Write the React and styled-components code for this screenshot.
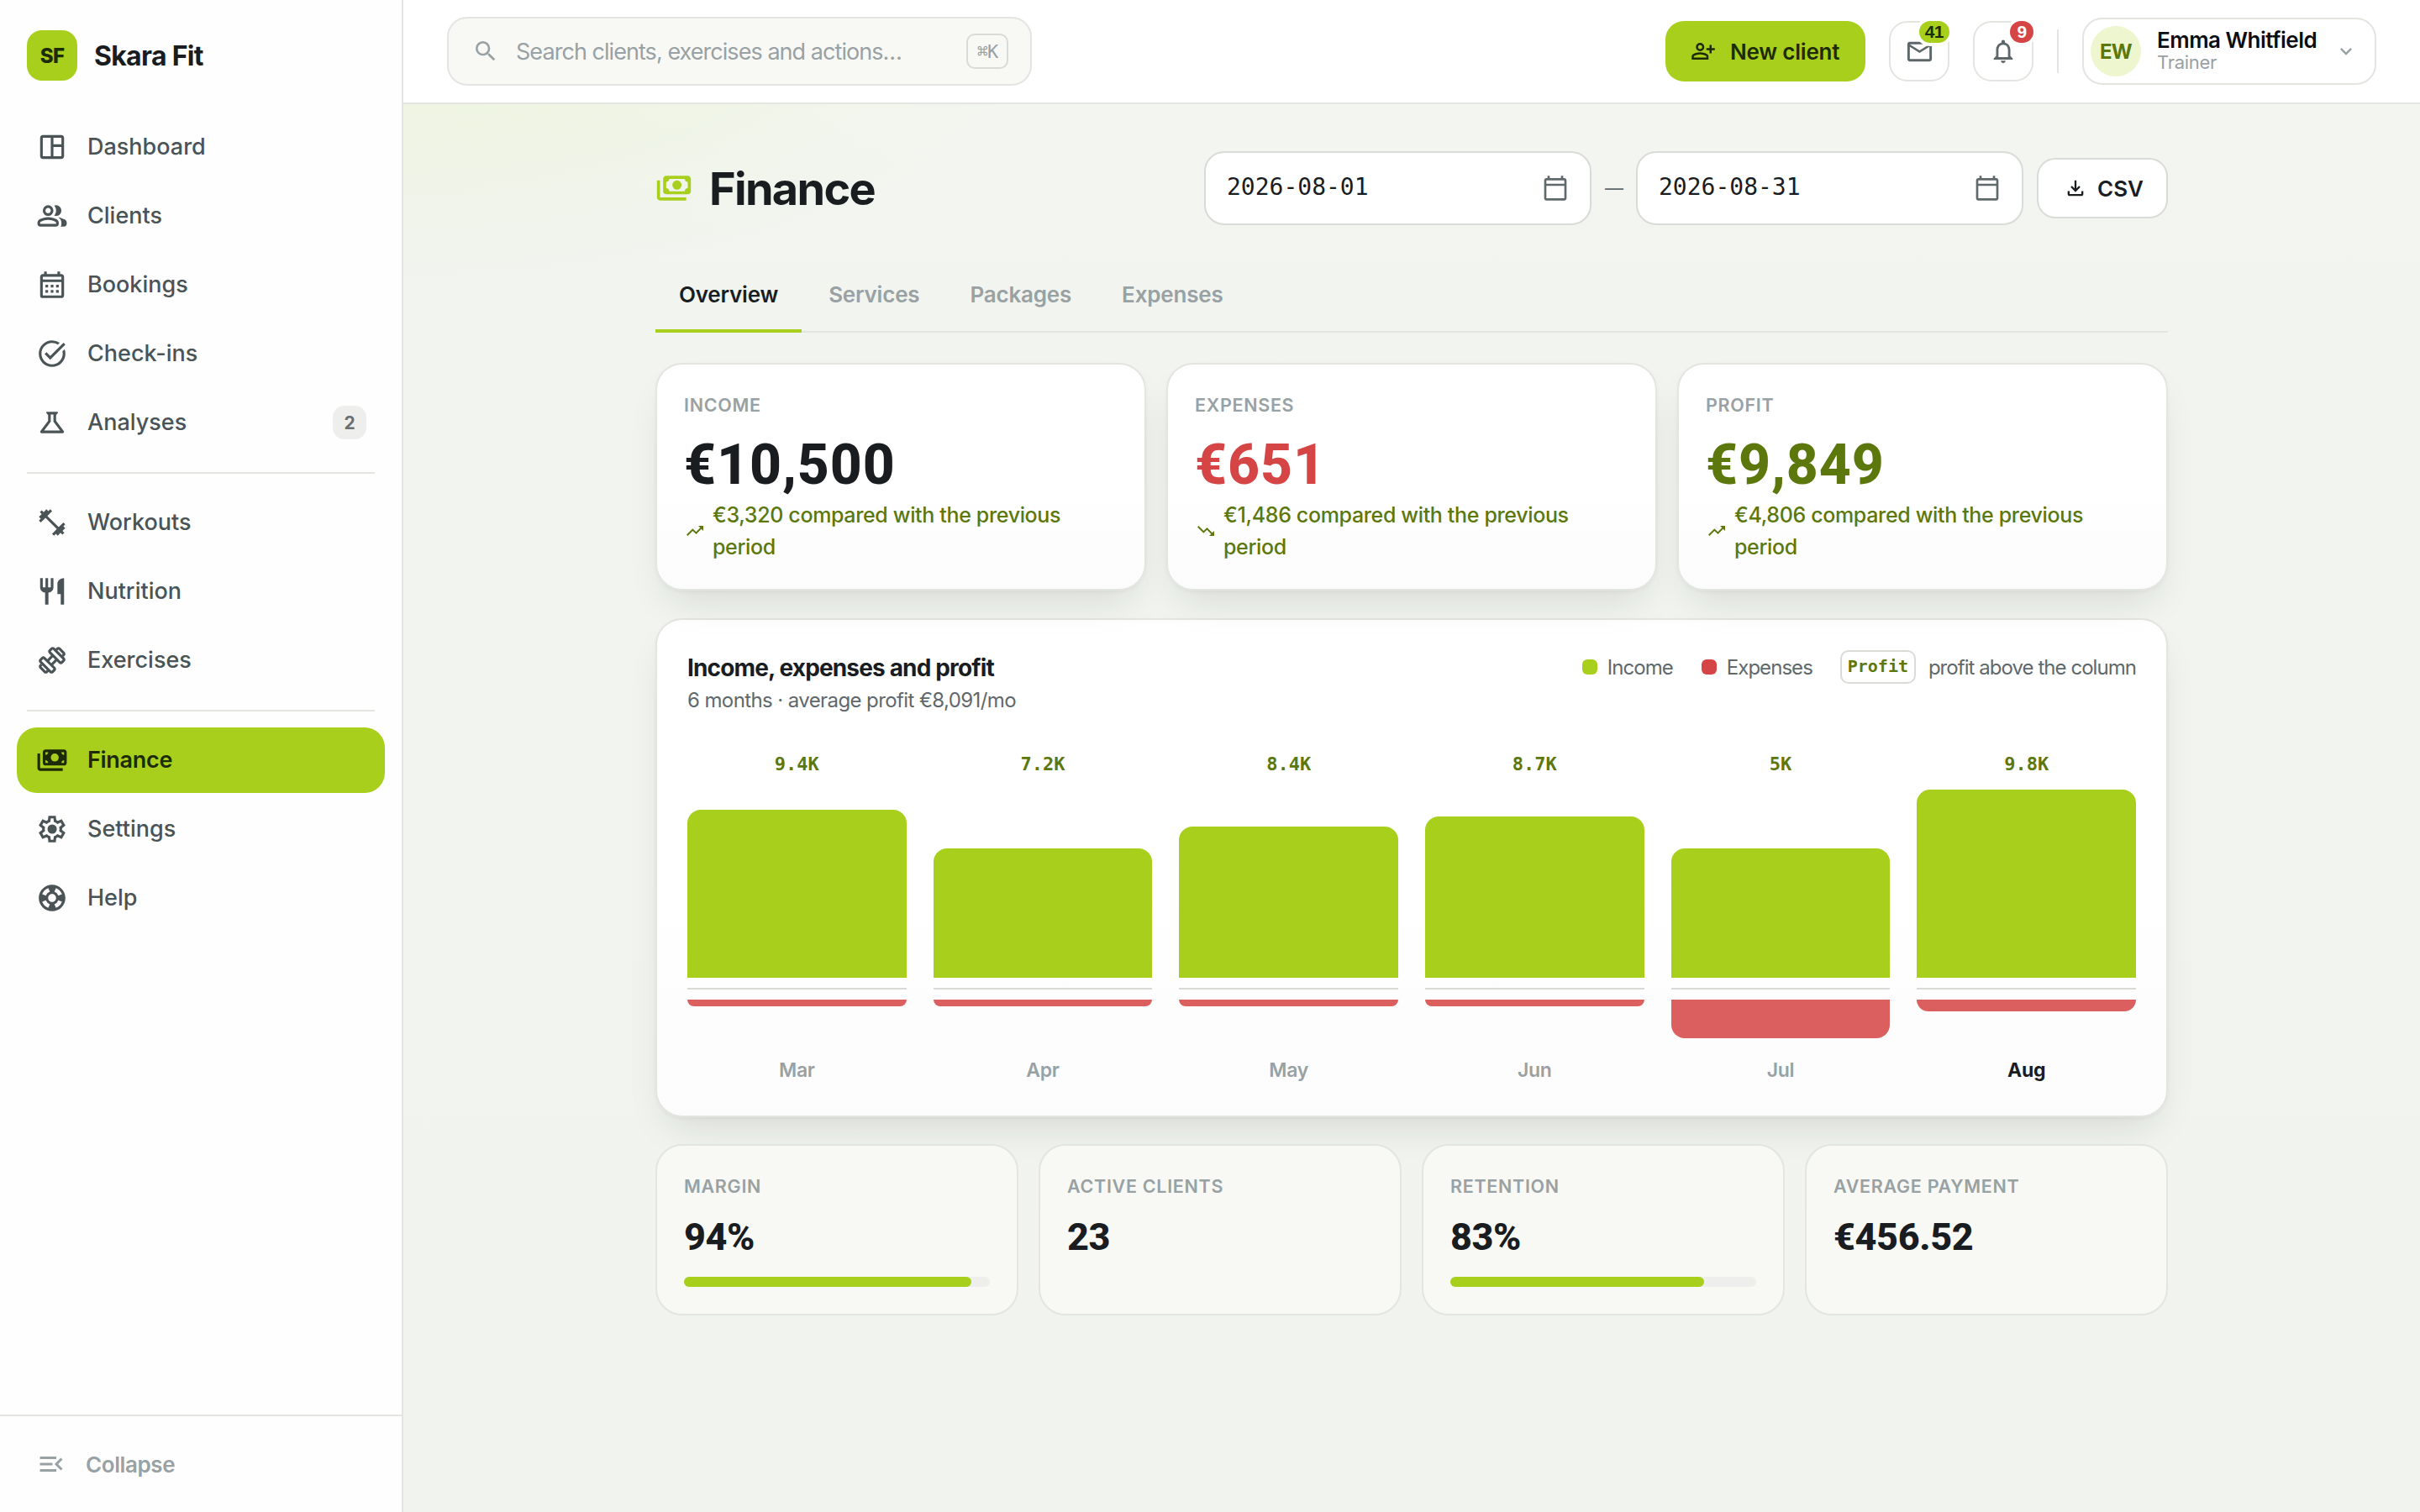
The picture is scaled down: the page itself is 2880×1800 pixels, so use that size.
import React from 'react';
import styled, { createGlobalStyle, css } from 'styled-components';
import {
  MdOutlineSpaceDashboard,
  MdOutlineCalendarMonth,
  MdTaskAlt,
  MdOutlineScience,
  MdRestaurant,
  MdSupport,
  MdMenuOpen,
  MdSearch,
  MdMailOutline,
  MdNotificationsNone,
  MdKeyboardArrowDown,
  MdOutlineCalendarToday,
  MdOutlineFileDownload,
  MdTrendingUp,
  MdTrendingDown,
} from 'react-icons/md';

const lime = '#a8cf1c';
const limeInk = '#1d2b05';
const limeText = '#5c780c';
const red = '#d64545';
const ink = '#1a1d1f';
const slate = '#4a5356';
const muted = '#98a1a3';
const line = '#e3e5e0';
const mono = "'DejaVu Sans Mono', 'Liberation Mono', monospace";
const digits = "Roboto, Inter, sans-serif";

const GlobalStyle = createGlobalStyle`
  * { box-sizing: border-box; }
  body {
    margin: 0;
    font-family: Inter, 'Liberation Sans', sans-serif;
    color: ${ink};
    background: #f0f3ee;
  }
  h1, h2, p { margin: 0; }
  svg { display: block; flex: none; }
`

/* Symbols missing from the icon package, on the 960 grid */
const Symbol = ({ d, size }) => (
  <svg width={size} height={size} viewBox="0 -960 960 960" fill="currentColor" fillRule="evenodd">
    <path d={d} />
  </svg>
)

const shapes = {
  group: 'M40-272q0-34 17.5-62.5T104-378q62-31 126-46.5T360-440q66 0 130 15.5T616-378q29 15 46.5 43.5T680-272v32q0 33-23.5 56.5T600-160H120q-33 0-56.5-23.5T40-240v-32Zm800 112H738q11-18 16.5-38.5T760-240v-40q0-44-24.5-84.5T666-434q51 6 96 20.5t84 35.5q36 20 55 44.5t19 53.5v40q0 33-23.5 56.5T840-160ZM360-480q-66 0-113-47t-47-113q0-66 47-113t113-47q66 0 113 47t47 113q0 66-47 113t-113 47Zm400-160q0 66-47 113t-113 47q-11 0-28-2.5t-28-5.5q27-32 41.5-71t14.5-81q0-42-14.5-81T544-792q14-5 28-6.5t28-1.5q66 0 113 47t47 113ZM120-240h480v-32q0-11-5.5-20T580-306q-54-27-109-40.5T360-360q-56 0-111 13.5T140-306q-9 5-14.5 14t-5.5 20v32Zm240-320q33 0 56.5-23.5T440-640q0-33-23.5-56.5T360-720q-33 0-56.5 23.5T280-640q0 33 23.5 56.5T360-560Z',
  exercise: 'm536-84-56-56 142-142-340-340-142 142-56-56 56-58-56-56 84-84-56-58 56-56 58 56 84-84 56 56 58-56 56 56-142 142 340 340 142-142 56 56-56 58 56 56-84 84 56 58-56 56-58-56-84 84-56-56-58 56Z',
  dumbbell: 'm826-585-56-56 30-31-128-128-31 30-57-57 30-31q23-23 57-22.5t57 23.5l129 129q23 23 23 56.5T857-615l-31 30ZM346-104q-23 23-56.5 23T233-104L104-233q-23-23-23-56.5t23-56.5l30-30 57 57-31 30 129 129 30-31 57 57-30 30Zm397-336 57-57-303-303-57 57 303 303ZM463-160l57-58-302-302-58 57 303 303Zm-6-234 110-109-64-64-109 110 63 63Zm63 290q-23 23-57 23t-57-23L104-406q-23-23-23-57t23-57l57-57q23-23 56.5-23t56.5 23l63 63 110-110-63-62q-23-23-23-57t23-57l57-57q23-23 56.5-23t56.5 23l303 303q23 23 23 56.5T857-441l-57 57q-23 23-57 23t-57-23l-62-63-110 110 63 63q23 23 23 56.5T577-161l-57 57Z',
  payments: 'M560-440q-50 0-85-35t-35-85 35-85 85-35 85 35 35 85-35 85-85 35ZM280-320q-33 0-56.5-23.5T200-400v-320q0-33 23.5-56.5T280-800h560q33 0 56.5 23.5T920-720v320q0 33-23.5 56.5T840-320H280Zm80-80h400q0-33 23.5-56.5T840-480v-160q-33 0-56.5-23.5T760-720H360q0 33-23.5 56.5T280-640v160q33 0 56.5 23.5T360-400Zm440 240H120q-33 0-56.5-23.5T40-240v-440h80v440h680v80Z',
  paymentsFill: 'M560-440q-50 0-85-35t-35-85 35-85 85-35 85 35 35 85-35 85-85 35ZM280-320q-33 0-56.5-23.5T200-400v-320q0-33 23.5-56.5T280-800h560q33 0 56.5 23.5T920-720v320q0 33-23.5 56.5T840-320H280Zm80-80q0-33-23.5-56.5T280-480v80h80Zm400 0h80v-80q-33 0-56.5 23.5T760-400ZM280-640q33 0 56.5-23.5T360-720h-80v80Zm560 0v-80h-80q0 33 23.5 56.5T840-640ZM800-160H120q-33 0-56.5-23.5T40-240v-440h80v440h680v80Z',
  settings: 'm370-80-16-128q-13-5-24.5-12T307-235l-119 50L78-375l103-78q-1-7-1-13.5v-27q0-6.5 1-13.5L78-585l110-190 119 50q11-8 23-15t24-12l16-128h220l16 128q13 5 24.5 12t22.5 15l119-50 110 190-103 78q1 7 1 13.5v27q0 6.5-2 13.5l103 78-110 190-118-50q-11 8-23 15t-24 12L590-80H370Zm70-80h79l14-106q31-8 57.5-23.5T639-327l99 41 39-68-86-65q5-14 7-29.5t2-31.5q0-16-2-31.5t-7-29.5l86-65-39-68-99 42q-22-23-48.5-38.5T533-694l-13-106h-79l-14 106q-31 8-57.5 23.5T321-633l-99-41-39 68 86 64q-5 15-7 30t-2 32q0 16 2 31t7 30l-86 65 39 68 99-42q22 23 48.5 38.5T427-266l13 106Zm42-180q58 0 99-41t41-99q0-58-41-99t-99-41q-59 0-99.5 41T342-480q0 58 40.5 99t99.5 41Z',
  personAdd: 'M720-400v-120H600v-80h120v-120h80v120h120v80H800v120h-80Zm-360-80q-66 0-113-47t-47-113q0-66 47-113t113-47q66 0 113 47t47 113q0 66-47 113t-113 47ZM40-160v-112q0-34 17.5-62.5T104-378q62-31 126-46.5T360-440q66 0 130 15.5T616-378q29 15 46.5 43.5T680-272v112H40Zm80-80h480v-32q0-11-5.5-20T580-306q-54-27-109-40.5T360-360q-56 0-111 13.5T140-306q-9 5-14.5 14t-5.5 20v32Zm240-320q33 0 56.5-23.5T440-640q0-33-23.5-56.5T360-720q-33 0-56.5 23.5T280-640q0 33 23.5 56.5T360-560Z',
}

const Page = styled.div`
  display: grid;
  grid-template-columns: 480px 1fr;
  height: 1800px;
  width: 2880px;
  overflow: hidden;
`

/* ---------- sidebar ---------- */

const Sidebar = styled.aside`
  display: flex;
  flex-direction: column;
  background: #fefefe;
  border-right: 2px solid ${line};
`

const Brand = styled.div`
  display: flex;
  align-items: center;
  gap: 20px;
  padding: 36px 32px 40px;
`

const BrandMark = styled.div`
  width: 60px;
  height: 60px;
  border-radius: 18px;
  background: ${lime};
  color: ${limeInk};
  font-size: 24px;
  font-weight: 800;
  letter-spacing: -0.6px;
  display: grid;
  place-items: center;
`

const BrandName = styled.span`
  font-size: 32px;
  font-weight: 700;
  letter-spacing: -0.7px;
`

const Nav = styled.nav`
  display: flex;
  flex-direction: column;
  gap: 4px;
  padding: 0 20px;
  flex: 1;
`

const NavItem = styled.a`
  display: flex;
  align-items: center;
  gap: 23px;
  height: 78px;
  padding: 0 22px 0 23px;
  border-radius: 24px;
  color: ${slate};
  font-size: 27px;
  font-weight: 500;
  letter-spacing: 0;
  ${({ $active }) => $active && css`
    background: ${lime};
    color: ${limeInk};
    font-weight: 600;
    letter-spacing: -0.3px;
  `}
`

const NavLabel = styled.span`
  padding-bottom: 2px;
`

const NavCount = styled.span`
  margin-left: auto;
  min-width: 40px;
  height: 40px;
  border-radius: 14px;
  background: #eeefec;
  color: #687073;
  font-size: 21px;
  font-weight: 700;
  display: grid;
  place-items: center;
`

const NavDivider = styled.hr`
  width: 414px;
  height: 2px;
  border: 0;
  margin: 16px 12px 15px;
  background: ${line};
`

const Collapse = styled.button`
  display: flex;
  align-items: center;
  gap: 23px;
  height: 116px;
  padding: 0 43px;
  border: 0;
  border-top: 2px solid ${line};
  background: none;
  color: ${muted};
  font: 600 26px Inter, sans-serif;
  letter-spacing: -0.4px;
`

/* ---------- top bar ---------- */

const Main = styled.div`
  display: flex;
  flex-direction: column;
  min-width: 0;
  background:
    radial-gradient(1100px 480px at 0 0, rgba(205, 230, 110, 0.17), transparent 70%),
    linear-gradient(#f4f7f1, #f1f4ef 320px, #f0f3ee);
`

const TopBar = styled.header`
  display: flex;
  align-items: center;
  height: 124px;
  padding: 0 52px;
  background: #fff;
  border-bottom: 2px solid ${line};
`

const SearchBox = styled.div`
  display: flex;
  align-items: center;
  width: 696px;
  height: 82px;
  padding: 0 26px 0 28px;
  border: 2px solid ${line};
  border-radius: 24px;
  background: #f8f9f5;
  color: ${muted};
  font-size: 27px;
  letter-spacing: -0.95px;
  span { margin-left: 20px; }
`

const Kbd = styled.kbd`
  margin-left: auto;
  width: 50px;
  height: 42px;
  border: 2px solid #d9dbd6;
  border-radius: 10px;
  display: grid;
  place-items: center;
  font: 22px ${mono};
  letter-spacing: -1px;
`

const Actions = styled.div`
  display: flex;
  align-items: center;
  margin-left: auto;
`

const PrimaryButton = styled.button`
  display: flex;
  align-items: center;
  gap: 17px;
  width: 238px;
  height: 72px;
  padding: 0 0 0 30px;
  border: 0;
  border-radius: 22px;
  background: ${lime};
  color: ${limeInk};
  font: 600 26px Inter, sans-serif;
  letter-spacing: -0.2px;
`

const IconButton = styled.button`
  position: relative;
  display: grid;
  place-items: center;
  width: 72px;
  height: 72px;
  margin-left: 28px;
  padding: 0;
  border: 2px solid ${line};
  border-radius: 22px;
  background: #fff;
  color: #5d676a;
`

const Badge = styled.span`
  position: absolute;
  top: -6px;
  right: -6px;
  height: 34px;
  min-width: 36px;
  padding: 0 7px;
  border: 4px solid #fff;
  border-radius: 17px;
  background: ${({ $tone }) => ($tone === 'red' ? red : lime)};
  color: ${({ $tone }) => ($tone === 'red' ? '#fff' : limeInk)};
  font-size: 21px;
  font-weight: 800;
  line-height: 26px;
  letter-spacing: -0.5px;
`

const Separator = styled.div`
  width: 2px;
  height: 52px;
  margin: 0 28px;
  background: ${line};
`

const UserMenu = styled.div`
  display: flex;
  align-items: center;
  width: 350px;
  height: 80px;
  padding: 0 20px 0 8px;
  border: 2px solid ${line};
  border-radius: 24px;
  color: ${muted};
  svg { margin-left: auto; }
`

const Avatar = styled.div`
  width: 60px;
  height: 60px;
  border-radius: 50%;
  background: #eef6d0;
  color: ${limeText};
  font-size: 24px;
  font-weight: 700;
  letter-spacing: -0.8px;
  display: grid;
  place-items: center;
`

const UserText = styled.div`
  margin-left: 19px;
  font-size: 22px;
  line-height: 26px;
  letter-spacing: -0.3px;
  strong {
    display: block;
    color: #0b0d0e;
    font-size: 26px;
    font-weight: 600;
    letter-spacing: -0.5px;
  }
`

/* ---------- page head ---------- */

const Content = styled.main`
  width: 1800px;
  margin: 0 auto;
  padding-top: 56px;
`

const PageHead = styled.div`
  display: flex;
  align-items: center;
  height: 88px;
  color: ${lime};
  h1 {
    margin-left: 20px;
    color: ${ink};
    font-size: 54px;
    font-weight: 700;
    letter-spacing: -1.7px;
  }
`

const Filters = styled.div`
  display: flex;
  align-items: center;
  gap: 16px;
  margin-left: auto;
  color: #5f686b;
`

const Dash = styled.span`
  width: 21px;
  font-size: 22px;
  text-align: center;
`

const DateField = styled.div`
  display: flex;
  align-items: center;
  justify-content: space-between;
  width: 461px;
  height: 88px;
  padding: 0 25px;
  border: 2px solid #d9dbd6;
  border-radius: 24px;
  background: #fff;
  span {
    color: ${ink};
    font: 28px ${mono};
    padding-bottom: 4px;
  }
`

const GhostButton = styled.button`
  display: flex;
  align-items: center;
  gap: 12px;
  width: 156px;
  height: 72px;
  padding: 0 0 0 30px;
  border: 2px solid #d9dbd6;
  border-radius: 22px;
  background: #fff;
  color: ${ink};
  font: 600 26px Inter, sans-serif;
`

const Tabs = styled.div`
  display: flex;
  gap: 4px;
  height: 88px;
  margin: 40px 0 36px;
  border-bottom: 2px solid ${line};
`

const Tab = styled.a`
  height: 88px;
  padding: 0 28px;
  line-height: 86px;
  font-size: 26px;
  font-weight: 600;
  letter-spacing: -0.2px;
  color: ${({ $active }) => ($active ? ink : muted)};
  border-bottom: 4px solid ${({ $active }) => ($active ? lime : 'transparent')};
`

/* ---------- cards ---------- */

const raised = css`
  border: 2px solid ${line};
  border-radius: 32px;
  background: linear-gradient(#fff 50%, #fcfcfc);
  box-shadow: 0 2px 4px rgba(26, 32, 20, 0.04), 0 24px 48px -16px rgba(26, 32, 20, 0.13);
`

const KpiRow = styled.section`
  display: grid;
  grid-template-columns: repeat(3, 1fr);
  gap: 24px;
`

const KpiCard = styled.div`
  ${raised}
  height: 271px;
  padding: 32px 32px 0;
`

const Label = styled.div`
  font-size: 21.5px;
  font-weight: 600;
  line-height: 32px;
  letter-spacing: 0.7px;
  text-transform: uppercase;
  color: ${muted};
`

const KpiValue = styled.div`
  margin-top: 17px;
  font-family: ${digits};
  font-size: 66px;
  font-weight: 800;
  line-height: 78px;
  letter-spacing: 0.9px;
  color: ${({ $color }) => $color};
`

const Delta = styled.div`
  display: flex;
  align-items: center;
  gap: 9px;
  padding: 1px 30px 0 1px;
  color: ${limeText};
  font-size: 25px;
  font-weight: 500;
  line-height: 38px;
  letter-spacing: -0.35px;
`

const ChartCard = styled.section`
  ${raised}
  height: 594px;
  margin-top: 33px;
  padding: 36px 36px 0;
`

const ChartHead = styled.div`
  display: flex;
  justify-content: space-between;
  height: 116px;
  h2 {
    font-size: 28px;
    font-weight: 700;
    line-height: 42px;
    letter-spacing: -0.85px;
  }
  p {
    color: #5f686b;
    font-size: 24px;
    line-height: 36px;
    letter-spacing: -0.6px;
  }
`

const Legend = styled.div`
  display: flex;
  align-items: center;
  height: 40px;
  color: #5f686b;
  font-size: 24px;
  letter-spacing: -0.95px;
`

const Swatch = styled.i`
  width: 18px;
  height: 18px;
  margin: 0 12px 0 34px;
  border-radius: 6px;
  background: ${({ $color }) => $color};
`

const ProfitTag = styled.span`
  width: 90px;
  height: 40px;
  margin: 0 15px 0 33px;
  border: 2px solid #d9dbd6;
  border-radius: 10px;
  color: ${limeText};
  font: bold 20px/34px ${mono};
  letter-spacing: 0;
  text-align: center;
`

const Columns = styled.div`
  display: grid;
  grid-template-columns: repeat(6, 1fr);
  gap: 32px;
`

const Column = styled.div`
  display: flex;
  flex-direction: column;
  text-align: center;
`

const Amount = styled.span`
  height: 40px;
  line-height: 40px;
  color: ${limeText};
  font-family: ${mono};
  font-size: 22px;
  font-weight: bold;
`

const IncomeTrack = styled.div`
  display: flex;
  align-items: flex-end;
  height: 234px;
  margin-bottom: 12px;
`

const IncomeBar = styled.div`
  width: 100%;
  border-radius: 16px 16px 0 0;
  background: ${lime};
`

const ExpenseTrack = styled.div`
  height: 80px;
  border-top: 2px solid #d9dad5;
  padding-top: 12px;
`

const ExpenseBar = styled.div`
  border-radius: 0 0 16px 16px;
  background: #dc5f60;
`

const Month = styled.span`
  line-height: 36px;
  font-size: 23px;
  font-weight: ${({ $current }) => ($current ? 700 : 600)};
  letter-spacing: -0.3px;
  color: ${({ $current }) => ($current ? ink : muted)};
`

const StatRow = styled.section`
  display: grid;
  grid-template-columns: repeat(4, 1fr);
  gap: 24px;
  margin-top: 32px;
`

const StatCard = styled.div`
  height: 204px;
  padding: 32px 32px 0;
  border: 2px solid ${line};
  border-radius: 32px;
  background: #f8f9f5;
`

const StatValue = styled.div`
  margin: 17px 0 19px;
  font-family: ${digits};
  font-size: 45px;
  font-weight: 800;
  line-height: 56px;
  letter-spacing: -0.4px;
`

const Progress = styled.div`
  height: 12px;
  border-radius: 6px;
  background: #eeefec;
  div {
    height: 12px;
    border-radius: 6px;
    background: ${lime};
  }
`

const navGroups = [
  [
    { label: 'Dashboard', icon: <MdOutlineSpaceDashboard size={38} /> },
    { label: 'Clients', icon: <Symbol d={shapes.group} size={38} /> },
    { label: 'Bookings', icon: <MdOutlineCalendarMonth size={38} /> },
    { label: 'Check-ins', icon: <MdTaskAlt size={38} /> },
    { label: 'Analyses', icon: <MdOutlineScience size={38} />, count: 2 },
  ],
  [
    { label: 'Workouts', icon: <Symbol d={shapes.exercise} size={38} /> },
    { label: 'Nutrition', icon: <MdRestaurant size={38} /> },
    { label: 'Exercises', icon: <Symbol d={shapes.dumbbell} size={38} /> },
  ],
  [
    { label: 'Finance', icon: <Symbol d={shapes.paymentsFill} size={38} />, active: true },
    { label: 'Settings', icon: <Symbol d={shapes.settings} size={38} /> },
    { label: 'Help', icon: <MdSupport size={38} /> },
  ],
]

const kpis = [
  { label: 'Income', value: '€10,500', delta: '€3,320', color: ink, Icon: MdTrendingUp },
  { label: 'Expenses', value: '€651', delta: '€1,486', color: red, Icon: MdTrendingDown },
  { label: 'Profit', value: '€9,849', delta: '€4,806', color: limeText, Icon: MdTrendingUp },
]

const months = [
  { name: 'Mar', profit: '9.4K', income: 200, expense: 8 },
  { name: 'Apr', profit: '7.2K', income: 154, expense: 8 },
  { name: 'May', profit: '8.4K', income: 180, expense: 8 },
  { name: 'Jun', profit: '8.7K', income: 192, expense: 8 },
  { name: 'Jul', profit: '5K', income: 154, expense: 46 },
  { name: 'Aug', profit: '9.8K', income: 224, expense: 14, current: true },
]

const stats = [
  { label: 'Margin', value: '94%', progress: 94 },
  { label: 'Active clients', value: '23' },
  { label: 'Retention', value: '83%', progress: 83 },
  { label: 'Average payment', value: '€456.52' },
]

export default function App() {
  return (
    <>
      <GlobalStyle />
      <Page>
        <Sidebar>
          <Brand>
            <BrandMark>SF</BrandMark>
            <BrandName>Skara Fit</BrandName>
          </Brand>
          <Nav>
            {navGroups.map((group, i) => (
              <React.Fragment key={i}>
                {i > 0 && <NavDivider />}
                {group.map((item) => (
                  <NavItem key={item.label} $active={item.active}>
                    {item.icon}
                    <NavLabel>{item.label}</NavLabel>
                    {item.count && <NavCount>{item.count}</NavCount>}
                  </NavItem>
                ))}
              </React.Fragment>
            ))}
          </Nav>
          <Collapse>
            <MdMenuOpen size={36} />
            Collapse
          </Collapse>
        </Sidebar>

        <Main>
          <TopBar>
            <SearchBox>
              <MdSearch size={32} />
              <span>Search clients, exercises and actions…</span>
              <Kbd>⌘K</Kbd>
            </SearchBox>
            <Actions>
              <PrimaryButton>
                <Symbol d={shapes.personAdd} size={30} />
                New client
              </PrimaryButton>
              <IconButton>
                <MdMailOutline size={35} />
                <Badge>41</Badge>
              </IconButton>
              <IconButton>
                <MdNotificationsNone size={34} />
                <Badge $tone="red">9</Badge>
              </IconButton>
              <Separator />
              <UserMenu>
                <Avatar>EW</Avatar>
                <UserText>
                  <strong>Emma Whitfield</strong>
                  Trainer
                </UserText>
                <MdKeyboardArrowDown size={28} />
              </UserMenu>
            </Actions>
          </TopBar>

          <Content>
            <PageHead>
              <Symbol d={shapes.payments} size={44} />
              <h1>Finance</h1>
              <Filters>
                <DateField>
                  <span>2026-08-01</span>
                  <MdOutlineCalendarToday size={32} />
                </DateField>
                <Dash>—</Dash>
                <DateField>
                  <span>2026-08-31</span>
                  <MdOutlineCalendarToday size={32} />
                </DateField>
                <GhostButton>
                  <MdOutlineFileDownload size={28} />
                  CSV
                </GhostButton>
              </Filters>
            </PageHead>

            <Tabs>
              <Tab $active>Overview</Tab>
              <Tab>Services</Tab>
              <Tab>Packages</Tab>
              <Tab>Expenses</Tab>
            </Tabs>

            <KpiRow>
              {kpis.map(({ label, value, delta, color, Icon }) => (
                <KpiCard key={label}>
                  <Label>{label}</Label>
                  <KpiValue $color={color}>{value}</KpiValue>
                  <Delta>
                    <Icon size={24} />
                    <span>{`${delta} compared with the previous period`}</span>
                  </Delta>
                </KpiCard>
              ))}
            </KpiRow>

            <ChartCard>
              <ChartHead>
                <div>
                  <h2>Income, expenses and profit</h2>
                  <p>6 months · average profit €8,091/mo</p>
                </div>
                <Legend>
                  <Swatch $color={lime} />
                  Income
                  <Swatch $color={red} />
                  Expenses
                  <ProfitTag>Profit</ProfitTag>
                  profit above the column
                </Legend>
              </ChartHead>
              <Columns>
                {months.map((m) => (
                  <Column key={m.name}>
                    <Amount>{m.profit}</Amount>
                    <IncomeTrack>
                      <IncomeBar style={{ height: m.income }} />
                    </IncomeTrack>
                    <ExpenseTrack>
                      <ExpenseBar style={{ height: m.expense }} />
                    </ExpenseTrack>
                    <Month $current={m.current}>{m.name}</Month>
                  </Column>
                ))}
              </Columns>
            </ChartCard>

            <StatRow>
              {stats.map((s) => (
                <StatCard key={s.label}>
                  <Label>{s.label}</Label>
                  <StatValue>{s.value}</StatValue>
                  {s.progress && (
                    <Progress>
                      <div style={{ width: `${s.progress}%` }} />
                    </Progress>
                  )}
                </StatCard>
              ))}
            </StatRow>
          </Content>
        </Main>
      </Page>
    </>
  )
}
